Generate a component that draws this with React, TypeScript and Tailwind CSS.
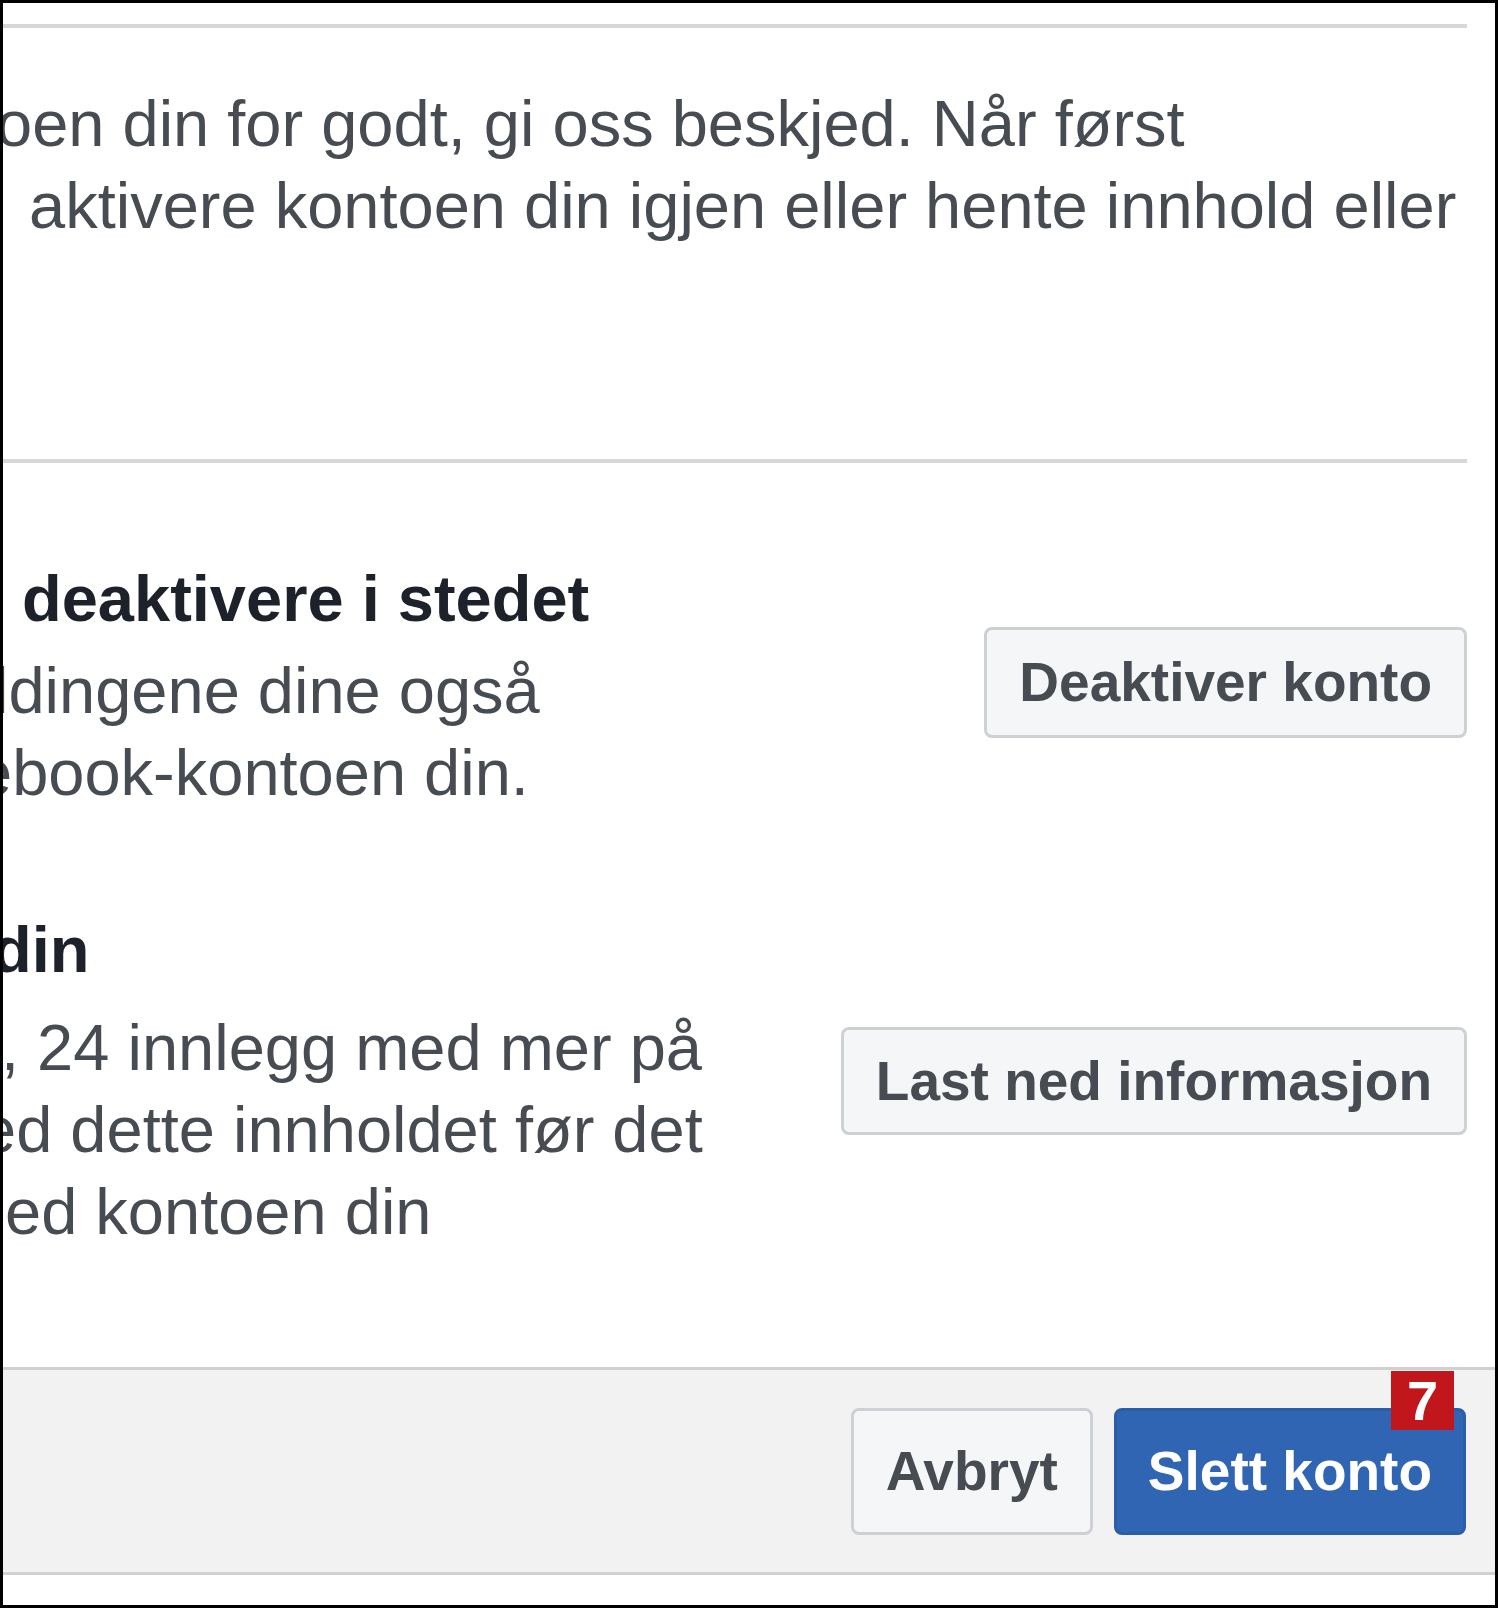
export default function App() {
  const btn =
    "flex items-center justify-center whitespace-nowrap border-[3px] border-[#cdd0d5] bg-[#f5f6f7] rounded-[8px] px-[32px] text-[55px] font-bold text-[#474b52]";
  return (
    <div className="w-[1500px] h-[1614px] bg-white font-['Liberation_Sans',Arial,sans-serif]">
      <div className="w-[1498px] h-[1608px] border-[3px] border-black bg-white overflow-hidden flex flex-col">
        <div className="pr-[28px] flex flex-col">
          <div className="mt-[21px] h-[4px] bg-[#d6d7d9]" />
          <div className="mt-[55px] text-[65px] leading-[82px] text-[#474b52]">
            <div className="whitespace-nowrap ml-[-7px]">oen din for godt, gi oss beskjed. Når først</div>
            <div className="whitespace-nowrap ml-[26px]">aktivere kontoen din igjen eller hente innhold eller</div>
          </div>
          <div className="mt-[212px] h-[4px] bg-[#d6d7d9]" />

          <div className="mt-[95px] flex items-center justify-between">
            <div className="flex flex-col">
              <div className="whitespace-nowrap ml-[19px] text-[65px] leading-[82px] font-bold text-[#1d2129]">
                deaktivere i stedet
              </div>
              <div className="mt-[10px] text-[65px] leading-[82px] text-[#474b52]">
                <div className="whitespace-nowrap ml-[-9px]">ldingene dine også</div>
                <div className="whitespace-nowrap ml-[-27px]">ebook-kontoen din.</div>
              </div>
            </div>
            <div className={btn + " h-[111px] mb-[8px]"}>Deaktiver konto</div>
          </div>

          <div className="mt-[95px] flex items-center justify-between">
            <div className="flex flex-col">
              <div className="whitespace-nowrap ml-[-11px] text-[65px] leading-[82px] font-bold text-[#1d2129]">
                din
              </div>
              <div className="mt-[16px] text-[65px] leading-[82px] text-[#474b52]">
                <div className="whitespace-nowrap ml-[-2px]">, 24 innlegg med mer på</div>
                <div className="whitespace-nowrap ml-[-23px]">ed dette innholdet før det</div>
                <div className="whitespace-nowrap ml-[2px]">ed kontoen din</div>
              </div>
            </div>
            <div className={btn + " h-[108px]"}>Last ned informasjon</div>
          </div>
        </div>

        <div className="mt-[114px] border-t-[3px] border-b-[3px] border-[#d0d0d0] bg-[#f2f2f2] pt-[38px] pb-[37px] pr-[29px] flex justify-end gap-[21px]">
          <div className={btn + " h-[127px]"}>Avbryt</div>
          <div className="relative flex items-center justify-center whitespace-nowrap h-[127px] border-[3px] border-[#2b5da8] bg-[#2f65b2] rounded-[8px] px-[31px] text-[55px] font-bold text-white">
            Slett konto
            <div className="absolute top-[-40px] right-[9px] w-[63px] h-[59px] bg-[#c0161c] flex items-center justify-center text-[56px] leading-none font-bold text-white">
              7
            </div>
          </div>
        </div>
      </div>
    </div>
  );
}
